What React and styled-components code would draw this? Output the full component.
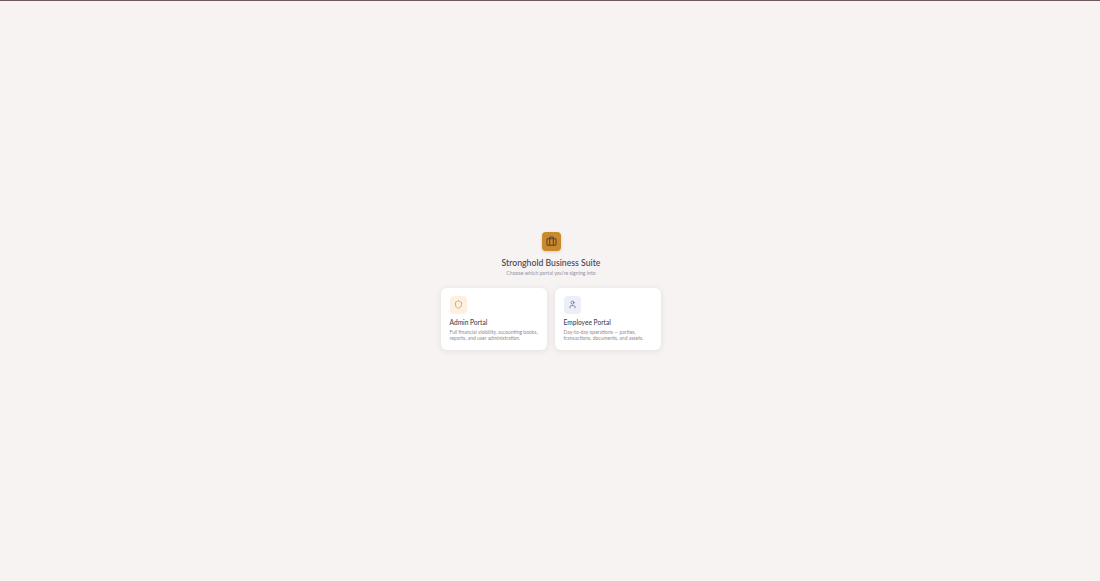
import styled, { createGlobalStyle } from "styled-components";
import { Shield, User, Briefcase } from "lucide-react";

const Global = createGlobalStyle`
  html, body {
    margin: 0;
    height: 100%;
    background: #f7f3f2;
  }
  #root {
    height: 100%;
  }
`;

const Page = styled.div`
  box-sizing: border-box;
  height: 581px;
  border-top: 1px solid #6e5a5c;
  padding-left: 2px;
  display: flex;
  flex-direction: column;
  align-items: center;
  justify-content: center;
  font-family: "Lato", "Liberation Sans", sans-serif;
`;

const Logo = styled.div`
  width: 19px;
  height: 19px;
  border-radius: 4px;
  background: #c98a2b;
  color: #5a4030;
  display: flex;
  align-items: center;
  justify-content: center;
  box-shadow: 0 1px 3px rgba(90, 60, 20, 0.2);
`;

const Title = styled.h1`
  margin: 6px 0 0;
  font-size: 8.7px;
  line-height: 11px;
  font-weight: 500;
  color: #45434f;
`;

const Subtitle = styled.p`
  margin: 1px 0 0;
  font-size: 5.2px;
  line-height: 8px;
  color: #95929a;
`;

const Cards = styled.div`
  margin-top: 11px;
  display: grid;
  grid-template-columns: 106px 106px;
  gap: 8px;
`;

const Card = styled.div`
  box-sizing: border-box;
  height: 62px;
  padding: 8px 8.5px;
  background: #ffffff;
  border-radius: 6px;
  box-shadow: 0 1px 6px rgba(70, 50, 50, 0.1);
`;

const IconBox = styled.div`
  width: 17.5px;
  height: 17.5px;
  border-radius: 4px;
  background: ${(p) => p.$bg};
  color: ${(p) => p.$color};
  display: flex;
  align-items: center;
  justify-content: center;
`;

const CardTitle = styled.h2`
  margin: 4.5px 0 0;
  font-size: 6.6px;
  line-height: 9px;
  font-weight: 500;
  color: #45434f;
`;

const CardText = styled.p`
  margin: 1.5px 0 0;
  font-size: 5px;
  line-height: 6.5px;
  color: #8f8c95;
`;

export default function App() {
  return (
    <>
      <Global />
      <Page>
        <Logo>
          <Briefcase size={11} strokeWidth={2.2} />
        </Logo>
        <Title>Stronghold Business Suite</Title>
        <Subtitle>Choose which portal you're signing into</Subtitle>
        <Cards>
          <Card>
            <IconBox $bg="#fdf0e0" $color="#c98a4b">
              <Shield size={9} strokeWidth={1.8} />
            </IconBox>
            <CardTitle>Admin Portal</CardTitle>
            <CardText>
              Full financial visibility, accounting books, reports, and user
              administration.
            </CardText>
          </Card>
          <Card>
            <IconBox $bg="#eceef8" $color="#5a5f78">
              <User size={9} strokeWidth={1.8} />
            </IconBox>
            <CardTitle>Employee Portal</CardTitle>
            <CardText>
              Day-to-day operations — parties, transactions, documents, and
              assets.
            </CardText>
          </Card>
        </Cards>
      </Page>
    </>
  );
}
